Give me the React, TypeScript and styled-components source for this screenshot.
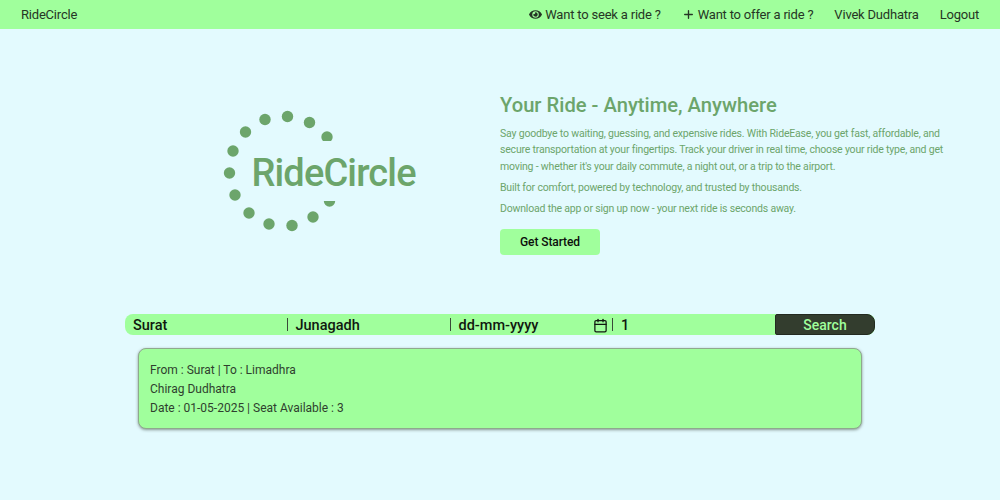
import React from "react";
import styled, { createGlobalStyle } from "styled-components";
import { Plus, Calendar } from "lucide-react";
import { FaEye } from "react-icons/fa";

const Global = createGlobalStyle`
  * { box-sizing: border-box; }
  html, body { margin: 0; padding: 0; background: #e3fafe; }
  body { font-family: Roboto, "Noto Sans", sans-serif; color: #2f3f2e; }
`;

const Page = styled.div`
  width: 1000px;
  height: 500px;
  overflow: hidden;
  display: flex;
  flex-direction: column;
`;

const Nav = styled.nav`
  height: 28.5px;
  background: #a0ff9c;
  display: flex;
  align-items: center;
  justify-content: space-between;
  padding: 0 21px;
  font-size: 13px;
  letter-spacing: -0.2px;
  color: #263625;
`;

const NavLinks = styled.div`
  display: flex;
  align-items: center;
  gap: 21px;
`;

const NavLink = styled.a`
  display: flex;
  align-items: center;
  gap: 3px;
`;

const Hero = styled.section`
  display: grid;
  grid-template-columns: 500px 500px;
  height: 285.5px;
`;

const LogoCell = styled.div`
  padding: 80.5px 0 0 222px;
`;

const Copy = styled.div`
  padding: 63px 54px 0 0;
`;

const Title = styled.h1`
  margin: 0 0 8px;
  font-size: 20.2px;
  line-height: 26px;
  font-weight: 500;
  color: #6ca56b;
`;

const Para = styled.p`
  margin: 0 0 4.7px;
  font-size: 10.5px;
  letter-spacing: -0.19px;
  line-height: 16.5px;
  color: #6ca56b;
`;

const Cta = styled.button`
  display: block;
  margin-top: 12px;
  width: 100px;
  height: 26px;
  border: 0;
  border-radius: 4px;
  background: #a0ff9c;
  color: #0c0f0c;
  font: 500 12px Roboto, sans-serif;
  letter-spacing: -0.1px;
`;

const SearchBar = styled.form`
  margin-left: 125px;
  width: 750px;
  height: 21px;
  display: flex;
  align-items: center;
  background: #a0ff9c;
  border-radius: 8px;
`;

const Field = styled.div<{ $w: number }>`
  width: ${(p) => p.$w}px;
  flex: none;
  height: 100%;
  display: flex;
  align-items: center;
  justify-content: space-between;
  padding: 1px 4px 0 8px;
  font-size: 14.5px;
  font-weight: 500;
  color: #10180f;
`;

const Divider = styled.span`
  width: 1px;
  height: 13px;
  flex: none;
  background: #3a4a39;
`;

const SearchButton = styled.button`
  margin-left: auto;
  width: 100px;
  height: 21px;
  background: #333d2e;
  color: #a0ff9c;
  border: 1px solid #232a20;
  border-radius: 2px 8px 8px 2px;
  font: 500 14px Roboto, sans-serif;
  padding: 0;
`;

const Card = styled.article`
  margin: 13px 0 0 138px;
  width: 724px;
  height: 81px;
  background: #a0ff9c;
  border-radius: 8px;
  border: 1px solid #8fa98d;
  box-shadow: 0 1px 3px rgba(40, 50, 40, 0.5);
  padding: 12px 11px;
  font-size: 12px;
  line-height: 19px;
  color: #2f3f2e;
`;

const CardLine = styled.div``;

const Logo = () => {
  const dots: [number, number][] = [
    [287.5, 116.5], [309.5, 122.5], [265, 119.5], [245.5, 132], [233, 151],
    [229.5, 173], [235, 195], [249, 213], [269, 224], [292, 225.5], [313, 217],
    [327, 137], [329.5, 201],
  ];
  return (
    <svg width="200" height="125" viewBox="222 109 200 125" style={{ display: "block" }}>
      <defs>
        <clipPath id="top"><rect x="222" y="109" width="200" height="32" /></clipPath>
        <clipPath id="bot"><rect x="222" y="201" width="200" height="33" /></clipPath>
      </defs>
      {dots.map(([x, y], i) => (
        <circle
          key={i}
          cx={x}
          cy={y}
          r="5.7"
          fill="#6ca56b"
          clipPath={i === 11 ? "url(#top)" : i === 12 ? "url(#bot)" : undefined}
        />
      ))}
      <text x="251.5" y="186" fontFamily="Roboto, sans-serif" fontSize="38" fontWeight="500" fill="#6ca56b" textLength="165">RideCircle</text>
    </svg>
  );
};

export default function App() {
  return (
    <Page>
      <Global />
      <Nav>
        <span>RideCircle</span>
        <NavLinks>
          <NavLink><FaEye size={13} />Want to seek a ride ?</NavLink>
          <NavLink><Plus size={13} strokeWidth={2.5} />Want to offer a ride ?</NavLink>
          <NavLink>Vivek Dudhatra</NavLink>
          <NavLink>Logout</NavLink>
        </NavLinks>
      </Nav>
      <Hero>
        <LogoCell><Logo /></LogoCell>
        <Copy>
          <Title>Your Ride - Anytime, Anywhere</Title>
          <Para>Say goodbye to waiting, guessing, and expensive rides. With RideEase, you get fast, affordable, and secure transportation at your fingertips. Track your driver in real time, choose your ride type, and get moving - whether it's your daily commute, a night out, or a trip to the airport.</Para>
          <Para>Built for comfort, powered by technology, and trusted by thousands.</Para>
          <Para>Download the app or sign up now - your next ride is seconds away.</Para>
          <Cta type="button">Get Started</Cta>
        </Copy>
      </Hero>
      <SearchBar>
        <Field $w={161.5}>Surat</Field>
        <Divider />
        <Field $w={162}>Junagadh</Field>
        <Divider />
        <Field $w={161.5}>dd-mm-yyyy<Calendar size={15} strokeWidth={2} /></Field>
        <Divider />
        <Field $w={100}>1</Field>
        <SearchButton type="button">Search</SearchButton>
      </SearchBar>
      <Card>
        <CardLine>From : Surat | To : Limadhra</CardLine>
        <CardLine>Chirag Dudhatra</CardLine>
        <CardLine>Date : 01-05-2025 | Seat Available : 3</CardLine>
      </Card>
    </Page>
  );
}
